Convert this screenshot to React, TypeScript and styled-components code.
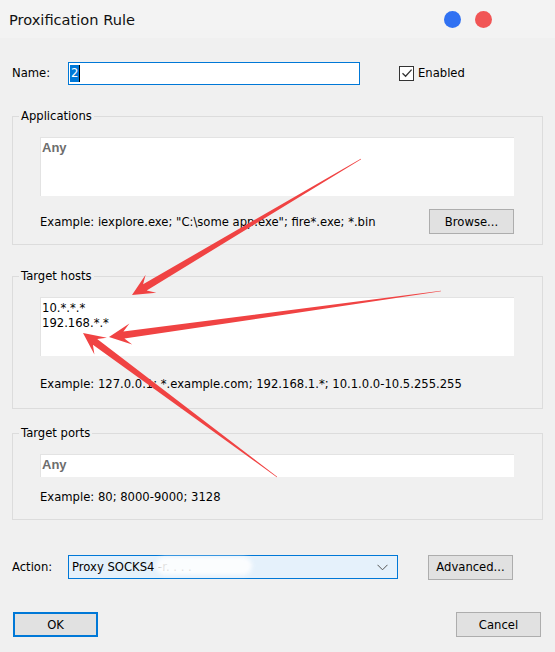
import styled, { createGlobalStyle } from 'styled-components';

const GlobalStyle = createGlobalStyle`
  html, body {
    margin: 0;
    padding: 0;
    background: #f0f0f0;
  }
  body {
    font-family: Tahoma, "DejaVu Sans", "Liberation Sans", sans-serif;
  }
`;

// tapered annotation arrow: thin tail, wide swept-back head
const arrowPoints = (tx: number, ty: number, hx: number, hy: number) => {
  const dx = hx - tx;
  const dy = hy - ty;
  const len = Math.sqrt(dx * dx + dy * dy);
  const ux = dx / len;
  const uy = dy / len;
  const nx = -uy;
  const ny = ux;
  const headLen = 22;
  const bx = hx - ux * headLen;
  const by = hy - uy * headLen;
  const mx = hx - ux * (headLen - 7);
  const my = hy - uy * (headLen - 7);
  const pts = [
    [tx + nx * 0.3, ty + ny * 0.3],
    [mx + nx * 3.6, my + ny * 3.6],
    [bx + nx * 10.5, by + ny * 10.5],
    [hx, hy],
    [bx - nx * 10.5, by - ny * 10.5],
    [mx - nx * 3.6, my - ny * 3.6],
    [tx - nx * 0.3, ty - ny * 0.3],
  ];
  return pts.map((p) => `${p[0].toFixed(1)},${p[1].toFixed(1)}`).join(' ');
};

const arrows = [
  { tail: [361, 159], head: [132, 295] },
  { tail: [441, 291], head: [109, 337] },
  { tail: [277, 477], head: [83, 333] },
];

const App = () => {
  return (
    <>
      <GlobalStyle />
      <Window>
        <TitleBar>
          <Title>Proxification Rule</Title>
          <Dots>
            <Dot color="#3071f2" />
            <Dot color="#f15555" />
          </Dots>
        </TitleBar>

        <Body>
          <Row>
            <Label>Name:</Label>
            <NameInput>
              <Selected>2</Selected>
              <Caret />
            </NameInput>
            <Check>
              <Box>
                <svg width="12" height="12" viewBox="0 0 12 12">
                  <path d="M1.5 6.2 L4.6 9.2 L10.6 2.6" fill="none" stroke="#333" strokeWidth="1.3" />
                </svg>
              </Box>
              Enabled
            </Check>
          </Row>

          <Group $mt={31} $pb={10}>
            <Legend>Applications</Legend>
            <TextArea $h={59}>
              <Placeholder>Any</Placeholder>
            </TextArea>
            <ExampleRow $mt={13}>
              <Hint>Example: iexplore.exe; "C:\some app.exe"; fire*.exe; *.bin</Hint>
              <Button $w={85}>Browse...</Button>
            </ExampleRow>
          </Group>

          <Group $mt={31} $pb={16}>
            <Legend>Target hosts</Legend>
            <TextArea $h={59}>
              <Line>10.*.*.*</Line>
              <Line>192.168.*.*</Line>
            </TextArea>
            <ExampleRow $mt={20}>
              <Hint>Example: 127.0.0.1; *.example.com; 192.168.1.*; 10.1.0.0-10.5.255.255</Hint>
            </ExampleRow>
          </Group>

          <Group $mt={24} $pb={14}>
            <Legend>Target ports</Legend>
            <TextArea $h={23}>
              <Placeholder>Any</Placeholder>
            </TextArea>
            <ExampleRow $mt={12}>
              <Hint>Example: 80; 8000-9000; 3128</Hint>
            </ExampleRow>
          </Group>

          <Row $mt={35}>
            <Label>Action:</Label>
            <Select>
              <SelectText>
                Proxy SOCKS4 -r. . . .
                <Smudge />
              </SelectText>
              <svg width="11" height="7" viewBox="0 0 11 7">
                <path d="M0.5 0.8 L5.5 5.8 L10.5 0.8" fill="none" stroke="#555" strokeWidth="1" />
              </svg>
            </Select>
            <Button $w={85} $ml={30}>Advanced...</Button>
          </Row>

          <Footer>
            <Button $w={85} $primary>OK</Button>
            <Button $w={85}>Cancel</Button>
          </Footer>
        </Body>

        <Overlay width="555" height="652" viewBox="0 0 555 652">
          {arrows.map((a, i) => (
            <polygon
              key={i}
              points={arrowPoints(a.tail[0], a.tail[1], a.head[0], a.head[1])}
              fill="#f04343"
            />
          ))}
        </Overlay>
      </Window>
    </>
  );
};

const Window = styled.div`
  position: relative;
  width: 555px;
  height: 652px;
  background: #f0f0f0;
  overflow: hidden;
  color: #000;
  font-size: 11.6px;
`;

const TitleBar = styled.div`
  height: 38px;
  background: #f3f3f3;
  display: flex;
  align-items: center;
  justify-content: space-between;
  padding: 0 63px 0 9px;
`;

const Title = styled.div`
  font-size: 14.6px;
  color: #111;
  margin-top: 1px;
`;

const Dots = styled.div`
  display: flex;
  gap: 14px;
`;

const Dot = styled.span<{ color: string }>`
  width: 17px;
  height: 17px;
  border-radius: 50%;
  background: ${(p) => p.color};
`;

const Body = styled.div`
  padding: 23px 12px 0 12px;
`;

const Row = styled.div<{ $mt?: number }>`
  display: flex;
  align-items: center;
  height: 24px;
  margin-top: ${(p) => p.$mt ?? 0}px;
`;

const Label = styled.div`
  width: 56px;
`;

const NameInput = styled.div`
  box-sizing: border-box;
  width: 292px;
  height: 23px;
  border: 1px solid #0078d7;
  background: #fff;
  display: flex;
  align-items: center;
  padding-left: 1px;
`;

const Selected = styled.span`
  background: #0078d7;
  color: #fff;
  line-height: 17px;
  padding: 0 1px;
`;

const Caret = styled.span`
  width: 1px;
  height: 17px;
  background: #000;
`;

const Check = styled.label`
  display: flex;
  align-items: center;
  gap: 4px;
  margin-left: 39px;
`;

const Box = styled.span`
  box-sizing: border-box;
  width: 15px;
  height: 15px;
  border: 1px solid #333;
  background: #fff;
  display: flex;
  align-items: center;
  justify-content: center;
`;

const Group = styled.div<{ $mt: number; $pb: number }>`
  position: relative;
  box-sizing: border-box;
  width: 531px;
  margin-top: ${(p) => p.$mt}px;
  border: 1px solid #dcdcdc;
  padding: 20px 28px ${(p) => p.$pb}px 27px;
`;

const Legend = styled.div`
  position: absolute;
  top: -9px;
  left: 6px;
  padding: 0 2px;
  background: #f0f0f0;
  line-height: 16px;
`;

const TextArea = styled.div<{ $h: number }>`
  box-sizing: border-box;
  height: ${(p) => p.$h}px;
  background: #fff;
  border-top: 1px solid #e3e3e3;
  border-left: 1px solid #e3e3e3;
  padding: 2px 1px;
`;

const Placeholder = styled.div`
  color: #6d6d6d;
  font-weight: bold;
  font-family: Arial, "Liberation Sans", sans-serif;
  font-size: 13px;
  line-height: 16px;
`;

const Line = styled.div`
  line-height: 15px;
  &:first-child {
    margin-top: 1px;
  }
`;

const ExampleRow = styled.div<{ $mt: number }>`
  display: flex;
  align-items: center;
  justify-content: space-between;
  margin-top: ${(p) => p.$mt}px;
  min-height: 16px;
`;

const Hint = styled.div`
  white-space: nowrap;
`;

const Button = styled.div<{ $w: number; $ml?: number; $primary?: boolean }>`
  box-sizing: border-box;
  width: ${(p) => p.$w}px;
  height: 25px;
  margin-left: ${(p) => p.$ml ?? 0}px;
  background: #e1e1e1;
  border: ${(p) => (p.$primary ? '2px solid #0078d7' : '1px solid #adadad')};
  display: flex;
  align-items: center;
  justify-content: center;
`;

const Select = styled.div`
  box-sizing: border-box;
  width: 330px;
  height: 24px;
  background: #e5f1fb;
  border: 1px solid #0078d7;
  display: flex;
  align-items: center;
  justify-content: space-between;
  padding: 0 9px 0 3px;
`;

const SelectText = styled.span`
  position: relative;
`;

const Smudge = styled.span`
  position: absolute;
  left: 84px;
  top: -3px;
  width: 96px;
  height: 18px;
  border-radius: 9px;
  background: #fff;
  opacity: 0.88;
  filter: blur(2px);
`;

const Footer = styled.div`
  display: flex;
  justify-content: space-between;
  margin-top: 33px;
  padding: 0 2px 0 1px;
`;

const Overlay = styled.svg`
  position: absolute;
  left: 0;
  top: 0;
  pointer-events: none;
`;

export default App;
